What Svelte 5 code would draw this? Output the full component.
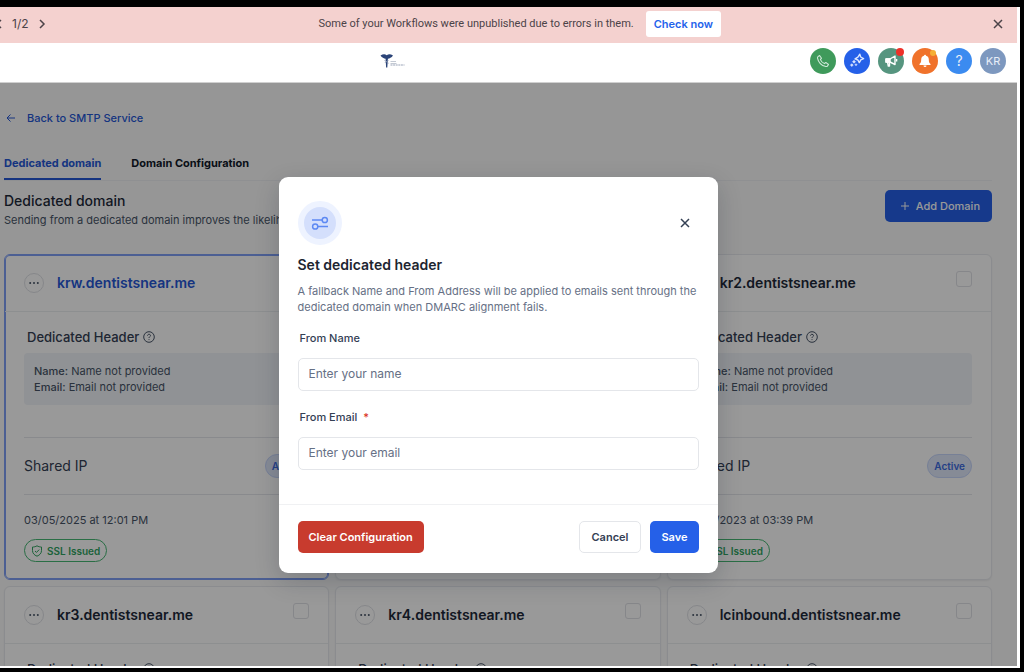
<script lang="ts">
  interface Domain {
    id: number;
    name: string;
    createdAt: string;
    selected?: boolean;
  }

  const domains: Domain[] = [
    { id: 1, name: 'krw.dentistsnear.me', createdAt: '03/05/2025 at 12:01 PM', selected: true },
    { id: 2, name: 'kr1.dentistsnear.me', createdAt: '12/10/2023 at 03:12 PM' },
    { id: 3, name: 'kr2.dentistsnear.me', createdAt: '12/20/2023 at 03:39 PM' },
    { id: 4, name: 'kr3.dentistsnear.me', createdAt: '12/11/2023 at 10:20 AM' },
    { id: 5, name: 'kr4.dentistsnear.me', createdAt: '12/11/2023 at 10:42 AM' },
    { id: 6, name: 'lcinbound.dentistsnear.me', createdAt: '12/12/2023 at 09:05 AM' }
  ];

  const tabs = ['Dedicated domain', 'Domain Configuration'];

  let activeTab = $state('Dedicated domain');
  let showBanner = $state(true);
  let showModal = $state(true);
  let fromName = $state('');
  let fromEmail = $state('');

  function clearConfiguration() {
    fromName = '';
    fromEmail = '';
  }

  function closeModal() {
    showModal = false;
  }

  function handleSubmit(e: SubmitEvent) {
    e.preventDefault();
    if (!fromEmail.trim()) {
      return;
    }
    closeModal();
  }
</script>

<div class="frame">
  <div class="app">
    {#if showBanner}
      <div class="banner">
        <div class="pager">
          <button class="icon-btn" aria-label="Previous">
            <svg width="12" height="12" viewBox="0 0 12 12"><path d="M8 2 4 6l4 4" /></svg>
          </button>
          <span>1/2</span>
          <button class="icon-btn" aria-label="Next">
            <svg width="12" height="12" viewBox="0 0 12 12"><path d="m4 2 4 4-4 4" /></svg>
          </button>
        </div>
        <div class="banner-message">
          <span>Some of your Workflows were unpublished due to errors in them.</span>
          <button class="check-btn">Check now</button>
        </div>
        <button class="icon-btn" aria-label="Dismiss" onclick={() => (showBanner = false)}>
          <svg width="12" height="12" viewBox="0 0 12 12"><path d="m2 2 8 8M10 2l-8 8" /></svg>
        </button>
      </div>
    {/if}

    <header class="topbar">
      <svg class="logo" width="26" height="14" viewBox="0 0 26 14" aria-hidden="true">
        <path d="M0.500 1.500C3 0 5 0 6.700 1.200 8.500 0 10.500 0 13 1.500 11.500 3.700 9.500 4.500 7.900 4.700L7.300 13.500h-1.200L5.600 4.700C4 4.500 2 3.700.5 1.500Z" fill="#2b4478" />
        <path d="M4.500 6c1 2 3.500 1.500 4 3.500M8.500 6c-1 2-3.500 1.500-3.500 3" fill="none" stroke="#8b98b5" stroke-width=".7" />
        <path d="M10.500 7.500h5.500M10.500 9.500h6" stroke="#b4bbc8" stroke-width=".8" />
        <path d="M10.500 11h14" stroke="#9aa4b8" stroke-width="1.200" stroke-dasharray="2 .6" />
      </svg>
      <nav class="actions">
        <button class="round phone" aria-label="Phone">
          <svg width="14" height="14" viewBox="0 0 14 14" fill="none" stroke="#cfe8d8" stroke-width="1.100" stroke-linejoin="round">
            <path d="M2 2.600 3.600 1.500 5.500 4.200 4.400 5.600c.7 1.700 2.200 3.200 4 4l1.400-1.100 2.700 1.900-1.100 1.700c-.4.400-1 .5-1.600.4C5.600 11.500 2.300 8 1.500 4.100c-.1-.6.100-1.100.5-1.500Z" />
          </svg>
        </button>
        <button class="round spark" aria-label="Assistant">
          <svg width="16" height="16" viewBox="0 0 16 16" fill="none" stroke="#dbe6ff" stroke-width="1.400" stroke-linejoin="round">
            <path d="m10.800 1.200.9 2.800 2.900 1.600-2.800 1.300-1.500 2.700-1.400-2.600L6 5.900l2.900-1.700Z" />
            <path d="m5 7.200 1.500 1.500L5 10.200 3.500 8.700ZM2.800 10.700l1.400 1.400-1.400 1.400-1.400-1.400ZM7 10.700l1 1-1 1-1-1Z" fill="#dbe6ff" stroke-width=".6" />
          </svg>
        </button>
        <button class="round news" aria-label="Announcements">
          <svg width="14" height="14" viewBox="0 0 14 14" fill="none" stroke="#fff" stroke-width="1.400" stroke-linejoin="round">
            <path d="M2 5h4l5-3v8.500L6 8H2Z" />
            <path d="M2 5h4v3H2Z" fill="#fff" />
            <path d="m3.500 8 .8 4h1.200L5.500 8M12.600 5v2.500" />
          </svg>
          <span class="dot red"></span>
        </button>
        <button class="round alerts" aria-label="Notifications">
          <svg width="14" height="14" viewBox="0 0 14 14" fill="#fff">
            <path d="M7 .8c.6 0 1 .4 1 .9 1.800.5 2.800 1.900 2.800 3.800 0 2.600.6 3.600 1.700 4.600v.8h-11v-.8c1.100-1 1.700-2 1.700-4.600C3.200 3.600 4.200 2.200 6 1.700c0-.5.400-.9 1-.9Z" />
            <path d="M5.500 11.600h3a1.500 1.500 0 0 1-3 0Z" />
          </svg>
          <span class="dot yellow"></span>
        </button>
        <button class="round help" aria-label="Help">?</button>
        <button class="round avatar">KR</button>
      </nav>
    </header>

    <div class="stage">
      <main class="page">
        <a class="back" href="#smtp">
          <svg width="10" height="10" viewBox="0 0 10 10"><path d="M9 5H1m3.500-3.500L1 5l3.500 3.500" /></svg>
          Back to SMTP Service
        </a>

        <div class="tabs" role="tablist">
          {#each tabs as tab}
            <button
              class="tab"
              class:active={tab === activeTab}
              role="tab"
              aria-selected={tab === activeTab}
              onclick={() => (activeTab = tab)}
            >
              {tab}
            </button>
          {/each}
        </div>

        <div class="page-head">
          <div>
            <h1>Dedicated domain</h1>
            <p>Sending from a dedicated domain improves the likelihood of reaching the inbox.</p>
          </div>
          <button class="add-btn">
            <svg width="10" height="10" viewBox="0 0 10 10"><path d="M5 1v8M1 5h8" /></svg>
            Add Domain
          </button>
        </div>

        <div class="cards">
          {#each domains as domain (domain.id)}
            <article class="card" class:selected={domain.selected}>
              <div class="card-head">
                <button class="more" aria-label="More options for {domain.name}">
                  <svg width="10" height="4" viewBox="0 0 10 4"><circle cx="1.200" cy="2" r="1" /><circle cx="5" cy="2" r="1" /><circle cx="8.800" cy="2" r="1" /></svg>
                </button>
                <h2>{domain.name}</h2>
                <input type="checkbox" checked={domain.selected} aria-label="Select {domain.name}" />
              </div>
              <div class="card-body">
                <h3>
                  Dedicated Header
                  <svg width="12" height="12" viewBox="0 0 12 12">
                    <circle cx="6" cy="6" r="5.300" />
                    <path d="M4.500 4.700C4.600 3.700 5.200 3.300 6 3.300c.9 0 1.500.5 1.500 1.300C7.500 5.600 6 5.700 6 7M6 8.200v.9" />
                  </svg>
                </h3>
                <div class="info">
                  <div><b>Name:</b> Name not provided</div>
                  <div><b>Email:</b> Email not provided</div>
                </div>
                <div class="ip-row">
                  <span class="ip">Shared IP</span>
                  <span class="pill">Active</span>
                </div>
                <div class="date">{domain.createdAt}</div>
                <span class="ssl">
                  <svg width="12" height="12" viewBox="0 0 12 12"><path d="M6 .8c1.400.9 3 1.200 4.500 1.200v3.500c0 2.700-1.700 4.600-4.500 5.700C3.200 10.100 1.500 8.200 1.500 5.500V2C3 2 4.600 1.700 6 .8ZM4 6l1.500 1.400L8.200 4.600" /></svg>
                  SSL Issued
                </span>
              </div>
            </article>
          {/each}
        </div>
      </main>

      {#if showModal}
        <div class="overlay">
          <form class="modal" role="dialog" aria-labelledby="modal-title" onsubmit={handleSubmit} novalidate>
            <div class="modal-body">
              <div class="modal-top">
                <span class="badge">
                  <svg width="18" height="14" viewBox="0 0 18 14">
                    <path d="M1 4h10M7 10.500h10" />
                    <circle cx="13.800" cy="4" r="2.600" />
                    <circle cx="4.200" cy="10.500" r="2.600" />
                  </svg>
                </span>
                <button type="button" class="icon-btn" aria-label="Close" onclick={closeModal}>
                  <svg width="12" height="12" viewBox="0 0 12 12"><path d="m2 2 8 8M10 2l-8 8" /></svg>
                </button>
              </div>
              <h2 id="modal-title">Set dedicated header</h2>
              <p>A fallback Name and From Address will be applied to emails sent through the dedicated domain when DMARC alignment fails.</p>
              <div class="field">
                <label for="from-name">From Name</label>
                <input id="from-name" type="text" placeholder="Enter your name" bind:value={fromName} />
              </div>
              <div class="field">
                <label for="from-email">From Email <span class="required">*</span></label>
                <input id="from-email" type="email" placeholder="Enter your email" bind:value={fromEmail} />
              </div>
            </div>
            <div class="modal-footer">
              <button type="button" class="btn danger" onclick={clearConfiguration}>Clear Configuration</button>
              <button type="button" class="btn secondary" onclick={closeModal}>Cancel</button>
              <button type="submit" class="btn primary">Save</button>
            </div>
          </form>
        </div>
      {/if}
    </div>
  </div>
</div>

<style>
  :global(body) {
    background: #000;
  }

  .frame {
    box-sizing: border-box;
    height: 100vh;
    padding: 7px 4px 4px 0;
    font-family: Inter, 'Liberation Sans', sans-serif;
    font-size: 11px;
    line-height: 16px;
    color: #344054;
  }

  .frame * {
    box-sizing: border-box;
  }

  .app {
    display: flex;
    flex-direction: column;
    height: 100%;
    padding: 0 3px 2px 0;
    background: #fff;
    overflow: hidden;
  }

  h1, h2, h3, p {
    margin: 0;
  }

  button, input {
    font: inherit;
    color: inherit;
  }

  button {
    padding: 0;
    border: none;
    background: none;
    cursor: pointer;
  }

  svg {
    flex: none;
  }

  .icon-btn {
    display: flex;
  }

  .icon-btn svg {
    fill: none;
    stroke: currentColor;
    stroke-width: 1.5;
  }

  /* banner */
  .banner {
    display: flex;
    align-items: center;
    height: 36px;
    padding: 0 13px 2px 0;
    background: #f4d1cf;
    color: #4b4348;
  }

  .pager {
    display: flex;
    align-items: center;
    gap: 7px;
    margin-left: -7px;
    font-size: 12px;
  }

  .banner-message {
    flex: 1;
    display: flex;
    align-items: center;
    justify-content: center;
    gap: 12px;
    font-family: Roboto, Inter, sans-serif;
  }

  .check-btn {
    height: 26px;
    padding: 0 8px;
    border-radius: 3px;
    background: #fff;
    color: #2563eb;
    font-family: Inter, 'Liberation Sans', sans-serif;
    font-size: 11px;
    font-weight: 600;
  }

  /* top bar */
  .topbar {
    display: flex;
    align-items: center;
    justify-content: space-between;
    height: 40px;
    padding: 0 11px 4px 380px;
    border-bottom: 1px solid #d0d0d0;
  }

  .actions {
    display: flex;
    gap: 8px;
  }

  .round {
    position: relative;
    display: flex;
    align-items: center;
    justify-content: center;
    width: 26px;
    height: 26px;
    border-radius: 50%;
    color: #e8eef8;
  }

  .phone {
    background: #3f9a5b;
  }

  .spark {
    background: #2560e8;
  }

  .news {
    background: #56957f;
  }

  .alerts {
    background: #f0722b;
  }

  .help {
    background: #3b8bf0;
    font-size: 14px;
  }

  .avatar {
    background: #7d98bf;
  }

  .dot {
    position: absolute;
    top: 0;
    right: 0;
    width: 8px;
    height: 8px;
    border-radius: 50%;
  }

  .dot.red {
    background: #ee3129;
  }

  .dot.yellow {
    top: 2px;
    right: 2px;
    width: 6px;
    height: 6px;
    background: #f5ae35;
  }

  /* page */
  .stage {
    position: relative;
    flex: 1;
    min-height: 0;
    overflow: hidden;
    background: #fafafa;
  }

  .page {
    padding: 27px 25px 0 4px;
  }

  .back {
    display: inline-flex;
    align-items: center;
    gap: 11px;
    padding-left: 2px;
    color: #2557d6;
    font-weight: 500;
    text-decoration: none;
  }

  .back svg,
  .add-btn svg {
    fill: none;
    stroke: currentColor;
  }

  .tabs {
    display: flex;
    gap: 30px;
    margin-top: 27px;
    border-bottom: 1px solid #eef0f3;
  }

  .tab {
    height: 26px;
    padding-bottom: 6px;
    border-bottom: 2px solid transparent;
    color: #101828;
    font-weight: 700;
  }

  .tab.active {
    border-color: #2557d6;
    color: #2557d6;
  }

  .page-head {
    display: flex;
    align-items: flex-start;
    justify-content: space-between;
    margin: 9px 0 26px;
  }

  h1 {
    font-size: 14px;
    line-height: 22px;
    font-weight: 500;
    color: #1d2939;
  }

  .page-head p {
    color: #475467;
  }

  .add-btn {
    display: flex;
    align-items: center;
    gap: 6px;
    height: 32px;
    padding: 0 12px 0 15px;
    border-radius: 5px;
    background: #2560e8;
    color: #fff;
    font-weight: 500;
  }

  .cards {
    display: grid;
    grid-template-columns: repeat(3, 1fr);
    gap: 6px;
  }

  .card {
    border: 1px solid #e8eaee;
    border-radius: 6px;
    background: #fff;
    box-shadow: 0 1px 2px rgba(16, 24, 40, 0.06);
  }

  .card.selected {
    border-color: #7f9ff5;
    box-shadow: inset 0 0 0 1px #7f9ff5;
  }

  .card-head {
    display: flex;
    align-items: center;
    gap: 13px;
    height: 57px;
    padding: 0 19px;
    border-bottom: 1px solid #eceef1;
  }

  .more {
    display: flex;
    align-items: center;
    justify-content: center;
    width: 20px;
    height: 20px;
    border: 1px solid #dfe1e6;
    border-radius: 50%;
    fill: #475467;
  }

  .card-head h2 {
    flex: 1;
    font-size: 14px;
    line-height: 20px;
    font-weight: 600;
    color: #1d2939;
  }

  .card.selected h2 {
    color: #2557d6;
  }

  .card-head input {
    appearance: none;
    width: 16px;
    height: 16px;
    margin: 0 0 8px;
    border: 1px solid #dfe1e6;
    border-radius: 3px;
    background: #fff;
  }

  .card-body {
    padding: 15px 19px 17px;
  }

  h3 {
    display: flex;
    align-items: center;
    gap: 4px;
    padding-left: 3px;
    font-size: 13px;
    line-height: 20px;
    font-weight: 500;
  }

  h3 svg {
    fill: none;
    stroke: #475467;
  }

  .info {
    margin-top: 6px;
    padding: 10px;
    border-radius: 4px;
    background: #f0f3f8;
    color: #475467;
  }

  .info b {
    font-weight: 500;
  }

  .ip-row {
    display: flex;
    align-items: center;
    justify-content: space-between;
    height: 58px;
    margin-top: 32px;
    border: 1px solid #e4e7ec;
    border-width: 1px 0;
  }

  .ip {
    font-size: 14px;
  }

  .pill {
    padding: 3px 6px;
    border: 1px solid #c6d5fb;
    border-radius: 12px;
    background: #dfe8fb;
    color: #3d6be0;
    font-size: 10px;
    font-weight: 600;
  }

  .date {
    margin: 17px 0 11px;
    color: #475467;
  }

  .ssl {
    display: inline-flex;
    align-items: center;
    gap: 4px;
    height: 23px;
    padding: 0 6px;
    border: 1px solid #46b774;
    border-radius: 12px;
    color: #2fa35f;
    font-size: 10px;
    font-weight: 600;
  }

  .ssl svg {
    fill: none;
    stroke: currentColor;
  }

  /* modal */
  .overlay {
    position: absolute;
    inset: 0;
    padding: 94px 21px 0 0;
    background: rgba(0, 0, 0, 0.4);
  }

  .modal {
    max-width: 439px;
    margin: 0 auto;
    border-radius: 9px;
    background: #fff;
    box-shadow: 0 8px 24px rgba(16, 24, 40, 0.2);
  }

  .modal-body {
    padding: 24px 19px 34px;
  }

  .modal-top {
    display: flex;
    align-items: center;
    justify-content: space-between;
    padding-right: 8px;
  }

  .badge {
    display: flex;
    align-items: center;
    justify-content: center;
    width: 44px;
    height: 44px;
    border: 6px solid #eef3ff;
    border-radius: 50%;
    background: #d4dffc;
    fill: none;
    stroke: #5d89f3;
    stroke-width: 1.5;
  }

  #modal-title {
    margin-top: 10px;
    font-size: 14px;
    line-height: 20px;
    font-weight: 600;
    color: #1d2530;
  }

  .modal p {
    margin-top: 8px;
    color: #667085;
  }

  .field {
    display: flex;
    flex-direction: column;
    gap: 12px;
    margin-top: 15px;
  }

  .field + .field {
    margin-top: 18px;
  }

  .field label {
    padding-left: 2px;
    font-weight: 500;
  }

  .required {
    margin-left: 3px;
    color: #d92d20;
  }

  .field input {
    width: 100%;
    height: 33px;
    padding: 0 10px 2px;
    border: 1px solid #e4e6ea;
    border-radius: 5px;
    background: #fff;
    font-size: 12px;
    outline: none;
  }

  .field input:focus {
    border-color: #2560e8;
  }

  .field input::placeholder {
    color: #667085;
    opacity: 1;
  }

  .modal-footer {
    display: flex;
    gap: 9px;
    padding: 16px 19px 20px;
    border-top: 1px solid #f0f1f3;
  }

  .btn {
    height: 32px;
    padding: 0 11px;
    border-radius: 5px;
    font-weight: 600;
  }

  .btn.danger {
    margin-right: auto;
    background: #c83b2e;
    color: #fff;
  }

  .btn.secondary {
    padding: 0 12px;
    border: 1px solid #e4e6ea;
  }

  .btn.primary {
    background: #2560e8;
    color: #fff;
  }
</style>
